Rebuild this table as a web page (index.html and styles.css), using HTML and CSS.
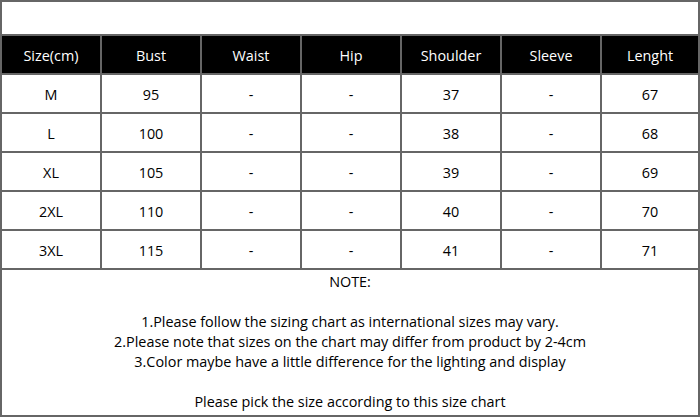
FILE: index.html
```html
<!DOCTYPE html>
<html>
<head>
<meta charset="utf-8">
<link rel="stylesheet" href="styles.css">
</head>
<body>
<div class="sheet">
  <div class="top"></div>
  <div class="chart">
    <div class="cell head">Size(cm)</div>
    <div class="cell head">Bust</div>
    <div class="cell head">Waist</div>
    <div class="cell head">Hip</div>
    <div class="cell head">Shoulder</div>
    <div class="cell head">Sleeve</div>
    <div class="cell head">Lenght</div>

    <div class="cell">M</div><div class="cell">95</div><div class="cell">-</div><div class="cell">-</div><div class="cell">37</div><div class="cell">-</div><div class="cell">67</div>
    <div class="cell">L</div><div class="cell">100</div><div class="cell">-</div><div class="cell">-</div><div class="cell">38</div><div class="cell">-</div><div class="cell">68</div>
    <div class="cell">XL</div><div class="cell">105</div><div class="cell">-</div><div class="cell">-</div><div class="cell">39</div><div class="cell">-</div><div class="cell">69</div>
    <div class="cell">2XL</div><div class="cell">110</div><div class="cell">-</div><div class="cell">-</div><div class="cell">40</div><div class="cell">-</div><div class="cell">70</div>
    <div class="cell">3XL</div><div class="cell">115</div><div class="cell">-</div><div class="cell">-</div><div class="cell">41</div><div class="cell">-</div><div class="cell">71</div>
  </div>
  <div class="note">
    <p>NOTE:</p>
    <p class="gap">1.Please follow the sizing chart as international sizes may vary.</p>
    <p>2.Please note that sizes on the chart may differ from product by 2-4cm</p>
    <p>3.Color maybe have a little difference for the lighting and display</p>
    <p class="gap">Please pick the size according to this size chart</p>
  </div>
</div>
</body>
</html>
```
FILE: styles.css
```css
html, body {
  margin: 0;
  padding: 0;
  background: #fff;
}
.sheet {
  width: 700px;
  height: 417px;
  box-sizing: border-box;
  border: 2px solid #666;
  background: #fff;
  font-family: "Open Sans", "Noto Sans", sans-serif;
  font-size: 14.4px;
  color: #000;
  display: flex;
  flex-direction: column;
}
.top {
  height: 32px;
}
.chart {
  display: grid;
  grid-template-columns: repeat(6, 98px) 1fr;
  grid-auto-rows: 37px;
  gap: 2px;
  padding: 2px 0;
  background: #666;
}
.cell {
  background: #fff;
  display: flex;
  align-items: center;
  justify-content: center;
  padding-top: 1px;
}
.cell.head {
  background: #000;
  color: #fff;
}
.note {
  flex: 1;
  text-align: center;
  padding-top: 2px;
  line-height: 20px;
}
.note p {
  margin: 0;
}
.note p.gap {
  margin-top: 20px;
}
```
